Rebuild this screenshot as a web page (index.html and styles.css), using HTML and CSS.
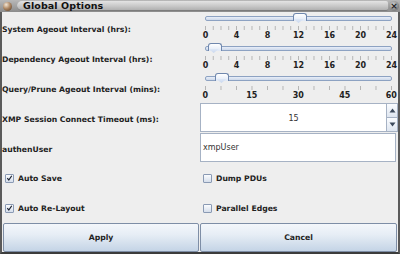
FILE: index.html
```html
<!DOCTYPE html>
<html>
<head>
<meta charset="utf-8">
<link rel="stylesheet" href="styles.css">
</head>
<body>
<div class="window">
  <div class="titlebar">
    <span class="ticon"></span>
    <div class="tpill"><span class="ttext">Global Options</span></div>
    <span class="tclose">×</span>
  </div>
  <div class="panel">
    <div class="label">System Ageout Interval (hrs):</div>
    <div class="slider hrs">
      <div class="track"><span class="thumb" style="left:50%"></span></div>
      <div class="ticks t24"></div>
      <div class="scale s7"><span>0</span><span>4</span><span>8</span><span>12</span><span>16</span><span>20</span><span>24</span></div>
    </div>

    <div class="label">Dependency Ageout Interval (hrs):</div>
    <div class="slider hrs">
      <div class="track"><span class="thumb" style="left:4.17%"></span></div>
      <div class="ticks t24"></div>
      <div class="scale s7"><span>0</span><span>4</span><span>8</span><span>12</span><span>16</span><span>20</span><span>24</span></div>
    </div>

    <div class="label">Query/Prune Ageout Interval (mins):</div>
    <div class="slider mins">
      <div class="track"><span class="thumb" style="left:8.33%"></span></div>
      <div class="ticks t12"></div>
      <div class="scale s5"><span>0</span><span>15</span><span>30</span><span>45</span><span>60</span></div>
    </div>

    <div class="label">XMP Session Connect Timeout (ms):</div>
    <div class="spinner">
      <div class="spinval">15</div>
      <div class="arrows">
        <div class="arr up"><svg width="7" height="5" viewBox="0 0 7 5"><path d="M0.5 4.5 L3.5 0.5 L6.5 4.5Z" fill="#3d4a5c"/></svg></div>
        <div class="arr dn"><svg width="7" height="5" viewBox="0 0 7 5"><path d="M0.5 0.5 L3.5 4.5 L6.5 0.5Z" fill="#3d4a5c"/></svg></div>
      </div>
    </div>

    <div class="label">authenUser</div>
    <div class="fieldcell"><div class="textfield">xmpUser</div></div>

    <div class="check"><span class="box on"><svg width="8" height="8" viewBox="0 0 8 8"><path d="M1.5 4.2 L3.2 6.3 L6.6 1.4" stroke="#1b2230" stroke-width="1.4" fill="none"/></svg></span>Auto Save</div>
    <div class="check right"><span class="box"></span>Dump PDUs</div>

    <div class="check"><span class="box on"><svg width="8" height="8" viewBox="0 0 8 8"><path d="M1.5 4.2 L3.2 6.3 L6.6 1.4" stroke="#1b2230" stroke-width="1.4" fill="none"/></svg></span>Auto Re-Layout</div>
    <div class="check right"><span class="box"></span>Parallel Edges</div>

    <div class="btncell"><div class="btn">Apply</div></div>
    <div class="btncell r"><div class="btn">Cancel</div></div>
  </div>
</div>
</body>
</html>
```
FILE: styles.css
```css
* { box-sizing: border-box; }
html, body { margin: 0; padding: 0; background: #4a4a4a; }
body { width: 400px; height: 254px; overflow: hidden; font-family: "DejaVu Sans", sans-serif; }
.window {
  width: 400px; height: 254px;
  background: #eeeeee;
  border-left: 2px solid #5a5a5a;
  border-right: 2px solid #5a5a5a;
  border-bottom: 2px solid #3c3c3c;
  display: flex; flex-direction: column;
}
.titlebar {
  height: 12px; flex: none;
  background: linear-gradient(#b8b8b8, #8c8c8c);
  display: flex; align-items: center;
  padding: 0 1px 0 1px;
  margin-left: -2px; margin-right: -2px;
}
.ticon {
  width: 9px; height: 9px; border-radius: 50%; flex: none;
  background: radial-gradient(circle at 35% 30%, #f2e6d6 0, #b08a66 45%, #4d3320 100%);
  margin-left: 2px; margin-right: 5px;
}
.tpill {
  flex: 1; height: 10px;
  border-radius: 5px 2px 2px 5px;
  background: linear-gradient(#e4e4e4, #c6c6c6 60%, #b0b0b0);
  border-bottom: 1px solid #7c7c7c;
  display: flex; align-items: center;
  padding-left: 6px;
}
.ttext { font-size: 9.5px; font-weight: bold; color: #111; letter-spacing: 0.1px; line-height: 10px; }
.tclose {
  width: 10px; height: 10px; border-radius: 50%; flex: none;
  background: radial-gradient(circle at 40% 35%, #d0d0d0, #5c5c5c);
  color: #222; font-size: 9px; line-height: 10px; text-align: center; font-weight: bold;
  margin-left: 1px;
}
.panel {
  flex: 1;
  display: grid;
  grid-template-columns: 198px 198px;
  grid-template-rows: repeat(8, 30px);
}
.label {
  font-size: 7.7px; font-weight: bold; color: #222;
  display: flex; align-items: center;
  padding-left: 0px; padding-top: 4px;
  white-space: nowrap;
}
.slider { padding-left: 5px; padding-top: 3px; width: 192px; }
.track {
  position: relative;
  width: 187px; height: 5px; margin-top: 1px;
  border: 1px solid #8da2c2; border-radius: 2px;
  background: linear-gradient(#e8eef8, #cdd8ea);
}
.thumb {
  position: absolute; top: -4px; margin-left: -6px;
  width: 12px; height: 10px;
}
.thumb::before {
  content: ""; position: absolute; left: 0; top: 0;
  width: 12px; height: 7px;
  border: 1px solid #6f87ad; border-bottom: none;
  border-radius: 3px 3px 0 0;
  background: linear-gradient(#ffffff, #dfe8f6);
}
.thumb::after {
  content: ""; position: absolute; left: 1px; top: 6px;
  width: 10px; height: 4px;
  background: linear-gradient(#dfe8f6, #c9d7ee);
  clip-path: polygon(0 0, 100% 0, 50% 100%);
}
.ticks {
  width: 188px; height: 4px; margin-top: 5px;
}
.t24 { background: linear-gradient(to right, #b4b4b4 1px, transparent 1px) 0 0 / 7.75px 100% repeat-x; }
.t12 { background: linear-gradient(to right, #b4b4b4 1px, transparent 1px) 0 0 / 15.5px 100% repeat-x; }
.scale {
  display: grid;
  font-size: 8px; font-weight: bold; color: #222;
  margin-top: 1px; line-height: 9px;
  text-align: center;
}
.s7 { grid-template-columns: repeat(7, 31px); margin-left: -15px; }
.s5 { grid-template-columns: repeat(5, 46.5px); margin-left: -23px; }
.spinner {
  margin: 1px 0 0 0;
  height: 29px; width: 198px;
  border: 1px solid #a6b2c4;
  background: #fff;
  display: flex;
}
.spinval {
  flex: 1; display: flex; align-items: center; justify-content: center;
  font-size: 8px; color: #333; padding-top: 1px;
}
.arrows { width: 11px; display: flex; flex-direction: column; border-left: 1px solid #a6b2c4; }
.arr {
  flex: 1; display: flex; align-items: center; justify-content: center;
  background: linear-gradient(#fafcff, #dfe6f0);
}
.arr.up { border-bottom: 1px solid #a6b2c4; }
.fieldcell { padding-top: 1px; }
.textfield {
  height: 29px; width: 196px;
  border: 1px solid #a6b2c4; background: #fff;
  display: flex; align-items: center;
  font-size: 8px; color: #333; padding-left: 2px;
}
.check {
  display: flex; align-items: center;
  font-size: 7.7px; font-weight: bold; color: #222;
  padding-left: 3px; padding-top: 2px;
}
.check.right { padding-left: 3px; }
.box {
  width: 9px; height: 9px; margin-right: 4px;
  border: 1px solid #8a9ab4; border-radius: 1px;
  background: linear-gradient(#fbfcfe, #d5deeb);
  display: flex; align-items: center; justify-content: center;
}
.box svg { display: block; }
.btncell { padding: 1px 0 0 1px; }
.btncell.r { padding-left: 0; }
.btn {
  height: 29px; width: 196px;
  border: 1px solid #7e8ea6; border-radius: 2px;
  background: linear-gradient(#f4f7fb, #e6edf5 40%, #c4d4e6);
  display: flex; align-items: center; justify-content: center;
  font-size: 7.7px; font-weight: bold; color: #222;
}
.btncell.r .btn { width: 197px; }
```
